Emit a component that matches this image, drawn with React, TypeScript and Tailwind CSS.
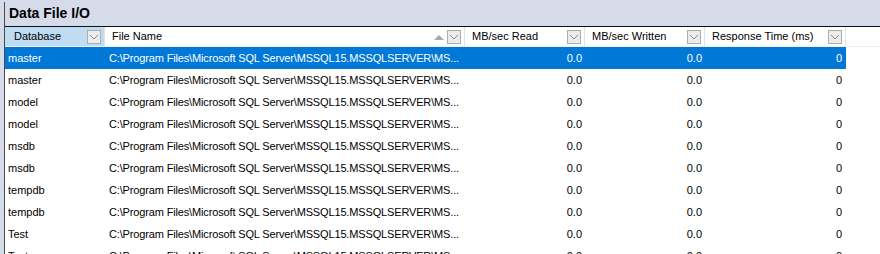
import React from "react";

const rows = [
  "master",
  "master",
  "model",
  "model",
  "msdb",
  "msdb",
  "tempdb",
  "tempdb",
  "Test",
  "Test",
];

const path = "C:\\Program Files\\Microsoft SQL Server\\MSSQL15.MSSQLSERVER\\MS...";

function DropBox() {
  return (
    <div className="w-[14px] h-[14px] border border-[#adadad] bg-[#ececec] flex items-center justify-center shrink-0">
      <svg width="10" height="6" viewBox="0 0 10 6">
        <path d="M1 1 L5 5 L9 1" fill="none" stroke="#8a8a8a" strokeWidth="1" />
      </svg>
    </div>
  );
}

function HeaderCell({
  label,
  width,
  blue,
  sort,
  pl,
}: {
  label: string;
  width: string;
  blue?: boolean;
  sort?: boolean;
  pl: string;
}) {
  return (
    <div
      className={`${width} h-full flex items-center pr-[3px] border-r border-[#e3e3e3] ${pl} ${
        blue ? "bg-[#bfdcf3]" : "bg-white"
      }`}
    >
      <span className="flex-1 whitespace-nowrap overflow-hidden">{label}</span>
      {sort && (
        <svg width="10" height="6" viewBox="0 0 10 6" className="mr-[3px]">
          <path d="M0 6 L5 1 L10 6 Z" fill="#a9a9a9" />
        </svg>
      )}
      <DropBox />
    </div>
  );
}

export default function App() {
  return (
    <div
      className="w-[880px] h-[254px] overflow-hidden bg-[#d6dbe9] text-black"
      style={{ fontFamily: '"Liberation Sans", Arial, sans-serif' }}
    >
      <div className="ml-[4px] mt-[2px] h-[252px] border-l border-[#4a4a4a] flex flex-col">
        <div className="h-[24px] shrink-0 flex items-center pl-[4px] font-bold text-[14px] leading-none pb-[2px]">
          Data File I/O
        </div>
        <div className="flex-1 min-h-0 overflow-hidden bg-white border-t border-[#111]">
          <div className="flex h-[20px] text-[11px] border-b border-[#f0f0f0]">
            <HeaderCell label="Database" width="w-[100px]" blue pl="pl-[9px]" />
            <HeaderCell label="File Name" width="w-[360px]" sort pl="pl-[7px]" />
            <HeaderCell label="MB/sec Read" width="w-[120px]" pl="pl-[7px]" />
            <HeaderCell label="MB/sec Written" width="w-[120px]" pl="pl-[7px]" />
            <HeaderCell label="Response Time (ms)" width="w-[141px]" pl="pl-[7px]" />
          </div>
          {rows.map((db, i) => (
            <div
              key={i}
              className={`flex w-[841px] h-[22px] shrink-0 items-center text-[11px] ${
                i === 0 ? "bg-[#0078d7] text-white" : ""
              }`}
            >
              <div className="w-[100px] pl-[3px] whitespace-nowrap overflow-hidden">{db}</div>
              <div className="w-[360px] pl-[4px] whitespace-nowrap overflow-hidden tracking-[-0.15px]">
                {path}
              </div>
              <div className="w-[120px] pr-[3px] text-right">0.0</div>
              <div className="w-[120px] pr-[3px] text-right">0.0</div>
              <div className="w-[141px] pr-[4px] text-right">0</div>
            </div>
          ))}
        </div>
      </div>
    </div>
  );
}
